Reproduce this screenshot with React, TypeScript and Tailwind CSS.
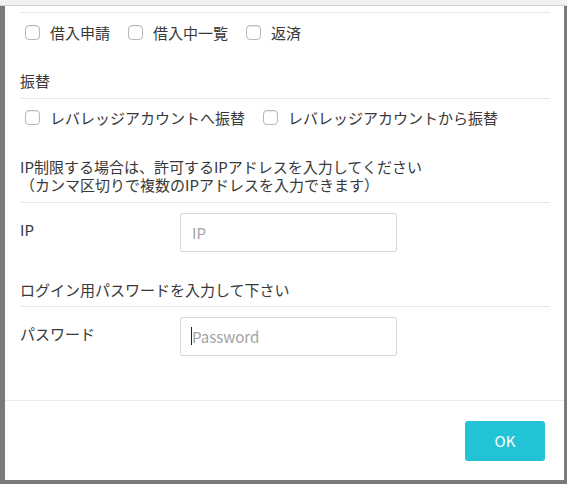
import React from 'react';

const font = "font-['Noto_Sans_CJK_JP','Noto_Sans',sans-serif]";

function Check({ label }: { label: string }) {
  return (
    <label className="flex items-center mr-[13px]">
      <span className="ml-[5px] mr-[10px] mb-[2px] w-[15px] h-[15px] rounded-[4px] border border-[#b8b8b8] bg-white shadow-[inset_0_1px_1px_rgba(0,0,0,0.08)]" />
      <span>{label}</span>
    </label>
  );
}

function Field({ label, placeholder, caret }: { label: string; placeholder: string; caret?: boolean }) {
  return (
    <div className="flex items-start border-t border-[#e6e6e6] pt-[10px]">
      <div className="w-[160px] mt-[8px] leading-[18px]">{label}</div>
      <div className="relative w-[217px] h-[39px] border border-[#d6d6d6] rounded-[2px] flex items-center px-[11px]">
        <span className="text-[#a3a3a3] leading-[18px]">{placeholder}</span>
        {caret && <span className="absolute left-[10px] top-[9px] w-px h-[18px] bg-[#222]" />}
      </div>
    </div>
  );
}

export default function App() {
  return (
    <div className={`w-[567px] h-[484px] bg-[#7a7a7a] overflow-hidden flex flex-col text-[15px] text-[#383838] ${font}`}>
      <div className="h-[6px] shrink-0 bg-[#f2f1ef] border-b border-[#d4d4d4]" />
      <div className="flex">
        <div className="w-[5px] shrink-0" />
        <div className="w-[559px] h-[474px] bg-white flex flex-col">
          <div className="h-[395px] border-b border-[#ebebeb] pl-[15px] pr-[14px] pt-[6px]">
            <div className="border-t border-[#e6e6e6] h-[41px] flex items-center">
              <Check label="借入申請" />
              <Check label="借入中一覧" />
              <Check label="返済" />
            </div>
            <div className="h-[45px] flex items-end pb-[8px] leading-[18px]">振替</div>
            <div className="border-t border-[#e6e6e6] h-[40px] flex items-center">
              <Check label="レバレッジアカウントへ振替" />
              <Check label="レバレッジアカウントから振替" />
            </div>
            <div className="h-[64px] flex flex-col justify-end pb-[8px] leading-[18px]">
              <div>IP制限する場合は、許可するIPアドレスを入力してください</div>
              <div>（カンマ区切りで複数のIPアドレスを入力できます）</div>
            </div>
            <Field label="IP" placeholder="IP" />
            <div className="h-[54px] flex items-end pb-[7px] leading-[18px]">ログイン用パスワードを入力して下さい</div>
            <Field label="パスワード" placeholder="Password" caret />
          </div>
          <div className="flex justify-end pt-[20px] pr-[19px]">
            <button className="w-[80px] h-[40px] rounded-[3px] bg-[#22c3d6] text-white text-[15px]">OK</button>
          </div>
        </div>
      </div>
    </div>
  );
}
